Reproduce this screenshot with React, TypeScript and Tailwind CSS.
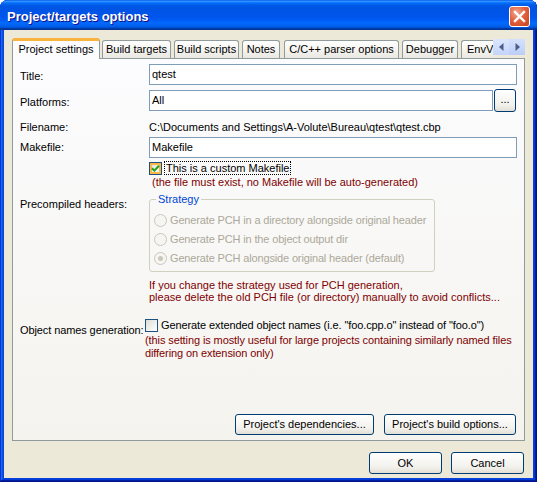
import React from 'react';

const tabs = [
  { label: 'Build targets', cls: 'w-[69px] ml-[2px]' },
  { label: 'Build scripts', cls: 'w-[65px] ml-[3px]' },
  { label: 'Notes', cls: 'w-[38px] ml-[3px]' },
  { label: 'C/C++ parser options', cls: 'w-[115px] ml-[4px]' },
  { label: 'Debugger', cls: 'w-[56px] ml-[3px]' },
];

const tabBase =
  'h-[18px] shrink-0 flex items-center justify-center border border-b-0 border-[#919B9C] rounded-t-[3px] bg-[linear-gradient(to_bottom,#FFFFFF,#F3F2EE_60%,#E8E7E1)] whitespace-nowrap';

const xpButton =
  'border border-[#003C74] rounded-[3px] bg-[linear-gradient(to_bottom,#FFFFFF,#F2F1EC_70%,#E3DFD5)] flex items-center justify-center whitespace-nowrap';

const textBox = 'h-[21px] border border-[#7F9DB9] bg-white pl-[2px] flex items-center';

const CheckBox: React.FC<{ checked?: boolean; hot?: boolean }> = ({ checked, hot }) => (
  <span
    className={
      'w-[13px] h-[13px] shrink-0 border border-[#1C5180] flex items-center justify-center bg-[linear-gradient(135deg,#DCDCD7,#FFFFFF)] ' +
      (hot ? 'shadow-[inset_0_0_0_2px_#F8B84A]' : '')
    }
  >
    {checked && (
      <svg width="9" height="9" viewBox="0 0 9 9">
        <path d="M1 4.2 L3.4 6.6 L8 1.8" fill="none" stroke="#21A121" strokeWidth="2" />
      </svg>
    )}
  </span>
);

const Radio: React.FC<{ label: string; checked?: boolean }> = ({ label, checked }) => (
  <div className="h-[19px] flex items-center pl-[4px] text-[#ACA899]">
    <span className="w-[13px] h-[13px] rounded-full border border-[#CAC8BB] bg-[#F6F5F1] flex items-center justify-center shrink-0">
      {checked && <span className="w-[5px] h-[5px] rounded-full bg-[#CAC8BB]" />}
    </span>
    <span className="ml-[3px] tracking-[-0.15px]">{label}</span>
  </div>
);

export default function App() {
  return (
    <div className="w-[537px] h-[482px] flex flex-col rounded-t-[8px] bg-[#0842D8] font-['Liberation_Sans',Arial,sans-serif] text-[11px] leading-[13px] text-black whitespace-nowrap shadow-[inset_-1px_-1px_#00138C,inset_1px_1px_#0831D9,inset_-2px_-2px_#001EA0,inset_2px_2px_#166AEE,inset_-3px_-3px_#003BDA,inset_3px_3px_#0855DD]">
      {/* title bar */}
      <div className="h-[30px] shrink-0 rounded-t-[8px] flex items-center pl-[7px] pr-[7px] bg-[linear-gradient(to_bottom,#0058EE_0%,#3593FF_4%,#288EFF_6%,#127DFF_8%,#036FFC_10%,#0262EE_14%,#0057E5_20%,#0054E3_24%,#0055EB_56%,#005BF5_66%,#026AFE_76%,#0062EF_86%,#0052D6_92%,#0040AB_94%,#003092_100%)]">
        <span className="mt-[3px] text-white font-bold text-[13px] [text-shadow:1px_1px_#0F1089]">
          Project/targets options
        </span>
        <div className="ml-auto mt-[2px] w-[21px] h-[21px] rounded-[3px] border border-white flex items-center justify-center bg-[radial-gradient(circle_at_35%_30%,#F2A88F,#E2613F_45%,#C7411D)]">
          <svg width="13" height="13" viewBox="0 0 13 13">
            <path d="M2 2 L11 11 M11 2 L2 11" stroke="white" strokeWidth="2.4" strokeLinecap="square" />
          </svg>
        </div>
      </div>

      {/* body */}
      <div className="flex-1 mx-[4px] mb-[4px] bg-[#ECE9D8] flex flex-col pt-[8px] pl-[8px] pr-[8px] pb-[4px]">
        {/* tabs */}
        <div className="h-[20px] shrink-0 flex items-end relative z-10">
          <div className="w-[88px] h-[21px] -mb-[1px] shrink-0 flex items-center justify-center border border-b-0 border-[#919B9C] border-t-[3px] border-t-[#F8B43C] rounded-t-[3px] bg-[#FCFCFE] pb-[1px]">
            Project settings
          </div>
          {tabs.map((t) => (
            <div key={t.label} className={`${tabBase} ${t.cls}`}>
              {t.label}
            </div>
          ))}
          <div className={`${tabBase} w-[32px] ml-[3px] justify-start pl-[5px] border-r-0 rounded-tr-none`}>EnvV</div>
          <div className="self-start mt-[1px] w-[32px] h-[16px] shrink-0 flex bg-[linear-gradient(to_bottom,#D5E1FC,#BCCEF7)]">
            <div className="w-[16px] flex items-center justify-center bg-[linear-gradient(to_bottom,#DCE6FD,#C4D4F9)]">
              <svg width="5" height="8" viewBox="0 0 5 8">
                <path d="M4.5 0 L0 4 L4.5 8 Z" fill="#4A5F88" />
              </svg>
            </div>
            <div className="w-[16px] flex items-center justify-center">
              <svg width="5" height="8" viewBox="0 0 5 8">
                <path d="M0.5 0 L5 4 L0.5 8 Z" fill="#4A5F88" />
              </svg>
            </div>
          </div>
        </div>

        {/* tab panel */}
        <div className="h-[383px] shrink-0 border border-[#919B9C] bg-[linear-gradient(to_bottom,#FCFCFE,#F4F3EE)] flex flex-col pl-[7px] pr-[7px] pt-[5px] pb-[5px]">
          <div className="flex items-center h-[21px]">
            <span className="w-[129px] shrink-0 mt-[3px]">Title:</span>
            <div className={`${textBox} flex-1`}>qtest</div>
          </div>

          <div className="flex items-center h-[23px] mt-[4px]">
            <span className="w-[129px] shrink-0 mt-[4px]">Platforms:</span>
            <div className={`${textBox} flex-1`}>All</div>
            <div className={`${xpButton} w-[22px] h-[23px] ml-[1px] mr-[1px] pb-[3px]`}>...</div>
          </div>

          <div className="flex items-center h-[20px] mt-[5px]">
            <span className="w-[129px] shrink-0">Filename:</span>
            <span>C:\Documents and Settings\A-Volute\Bureau\qtest\qtest.cbp</span>
          </div>

          <div className="flex items-center h-[21px]">
            <span className="w-[129px] shrink-0">Makefile:</span>
            <div className={`${textBox} flex-1`}>Makefile</div>
          </div>

          <div className="flex items-center h-[14px] mt-[3px] pl-[129px]">
            <CheckBox checked hot />
            <span className="ml-[2px] h-[14px] border border-dotted border-black pl-[1px] pr-[1px] flex items-center">
              This is a custom Makefile
            </span>
          </div>
          <div className="pl-[132px] mt-[1px] text-[#800000]">
            (the file must exist, no Makefile will be auto-generated)
          </div>

          <div className="flex items-start mt-[4px]">
            <span className="w-[129px] shrink-0 mt-[5px]">Precompiled headers:</span>
            <fieldset className="w-[286px] border border-[#D0D0BF] rounded-[3px] pt-[5px] pb-[3px]">
              <legend className="ml-[6px] px-[2px] text-[#0046D5]">Strategy</legend>
              <Radio label="Generate PCH in a directory alongside original header" />
              <Radio label="Generate PCH in the object output dir" />
              <Radio label="Generate PCH alongside original header (default)" checked />
            </fieldset>
          </div>

          <div className="pl-[129px] mt-[7px] leading-[12px] text-[#800000]">
            <div>If you change the strategy used for PCH generation,</div>
            <div>please delete the old PCH file (or directory) manually to avoid conflicts...</div>
          </div>

          <div className="flex items-start mt-[15px] tracking-[-0.1px]">
            <span className="w-[125px] shrink-0 mt-[6px]">Object names generation:</span>
            <div className="flex flex-col">
              <div className="flex items-center h-[13px] mt-[1px]">
                <CheckBox />
                <span className="ml-[3px]">Generate extended object names (i.e. "foo.cpp.o" instead of "foo.o")</span>
              </div>
              <div className="mt-[2px] leading-[12.5px] text-[#800000]">
                <div>(this setting is mostly useful for large projects containing similarly named files</div>
                <div>differing on extension only)</div>
              </div>
            </div>
          </div>

          <div className="mt-auto flex justify-end gap-[10px] pr-[1px]">
            <div className={`${xpButton} w-[139px] h-[21px]`}>Project's dependencies...</div>
            <div className={`${xpButton} w-[132px] h-[21px]`}>Project's build options...</div>
          </div>
        </div>

        {/* dialog buttons */}
        <div className="mt-[11px] flex justify-end gap-[9px] pr-[1px]">
          <div className={`${xpButton} w-[73px] h-[22px]`}>OK</div>
          <div className={`${xpButton} w-[73px] h-[22px]`}>Cancel</div>
        </div>
      </div>
    </div>
  );
}
